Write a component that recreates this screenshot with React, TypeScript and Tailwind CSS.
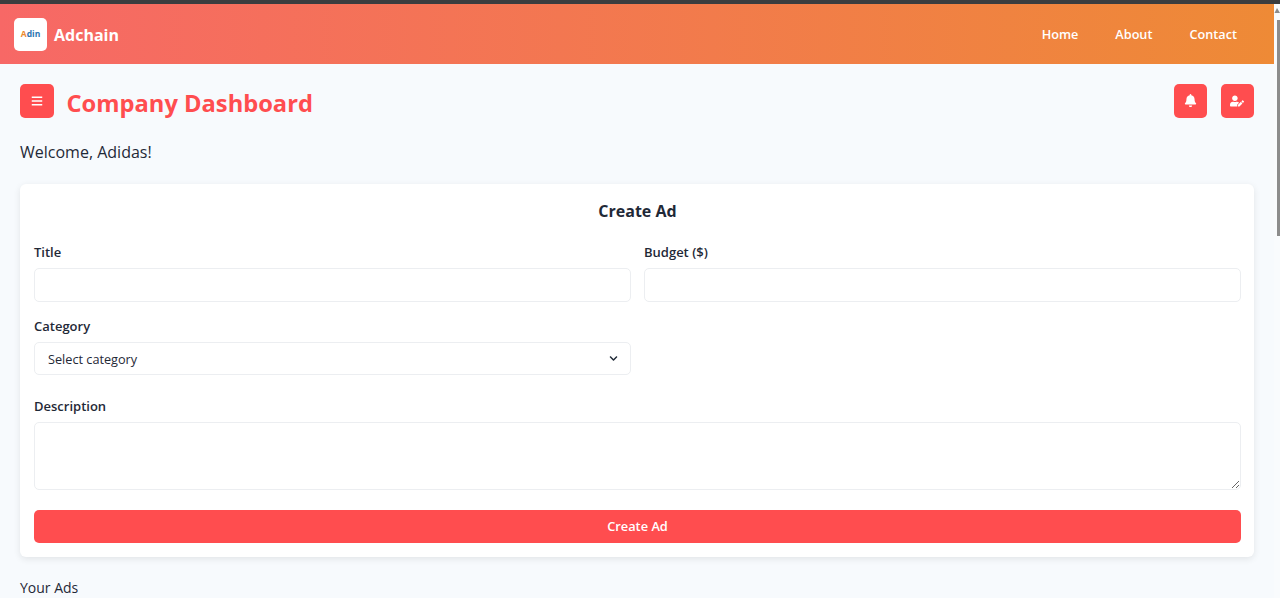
import { FaBars, FaBell, FaUserEdit, FaChevronDown } from 'react-icons/fa';

const inputCls = 'block w-full h-[33.5px] rounded-[5px] border border-[#eceef1] bg-white px-[13px] outline-none';
const iconBtn = 'w-[33.5px] h-[33.5px] rounded-[5px] bg-[#ff4d4f] text-white flex items-center justify-center';

function Field({ label, children }: { label: string; children: React.ReactNode }) {
  return (
    <div>
      <label className="block text-[13px] leading-[18px] font-[550] text-[#1f2937] mb-[7px]">{label}</label>
      {children}
    </div>
  );
}

export default function App() {
  return (
    <div className="h-[598px] overflow-hidden flex flex-col bg-[#f7fafd] text-[#1f2937] font-['Open_Sans','Noto_Sans',sans-serif]">
      <div className="h-1 shrink-0 bg-[#3b3d3f]" />
      <div className="flex flex-1 min-h-0">
        <div className="flex-1 min-w-0">
          {/* Navbar */}
          <nav className="h-[60px] flex items-center justify-between pl-[14px] pr-[37px] bg-linear-to-r/srgb from-[#f76866] to-[#ee8a36]">
            <div className="flex items-center gap-[7px]">
              <div className="w-[33px] h-[33px] rounded-[5px] bg-white flex items-center justify-center text-[8.5px] font-bold">
                <span className="text-[#ec8a2e]">A</span>
                <span className="text-[#2b74b0]">din</span>
              </div>
              <span className="text-white font-bold text-[16px] pt-[1px]">Adchain</span>
            </div>
            <div className="flex items-center gap-[37px] text-white font-[550] text-[12.7px] pt-[2px]">
              <a>Home</a>
              <a>About</a>
              <a>Contact</a>
            </div>
          </nav>

          <main className="px-5 pt-5">
            <div className="h-[33.5px] flex items-center justify-between">
              <div className="flex items-center gap-[13px]">
                <button className={iconBtn}>
                  <FaBars size={12} />
                </button>
                <h1 className="h-[33.5px] text-[23.7px] leading-[38px] font-bold text-[#ff4d4f]">Company Dashboard</h1>
              </div>
              <div className="flex gap-[13.4px]">
                <button className={iconBtn}>
                  <FaBell size={13} />
                </button>
                <button className={iconBtn}>
                  <FaUserEdit size={14} />
                </button>
              </div>
            </div>

            <p className="mt-[22.5px] text-[16px] leading-[24px]">Welcome, Adidas!</p>

            <section className="mt-5 bg-white rounded-md shadow-[0_2px_7px_rgba(0,0,0,0.09)] pl-[14px] pr-[13px] pt-[14px] pb-[13.5px]">
              <h2 className="text-center text-[16px] leading-[26px] font-bold mb-[19px]">Create Ad</h2>
              <div className="grid grid-cols-2 gap-x-[13px] gap-y-[15px]">
                <Field label="Title">
                  <input className={inputCls} />
                </Field>
                <Field label="Budget ($)">
                  <input className={inputCls} />
                </Field>
                <Field label="Category">
                  <div className={`${inputCls} flex items-center justify-between text-[12.7px]`}>
                    <span className="pt-[3px]">Select category</span>
                    <FaChevronDown size={9} className="mr-[-1px]" />
                  </div>
                </Field>
              </div>
              <div className="mt-[22px]">
                <Field label="Description">
                  <textarea className="block w-full h-[67.5px] rounded-[5px] border border-[#eceef1] bg-white px-3.5 py-2 outline-none resize-y" />
                </Field>
              </div>
              <button className="mt-5 w-full h-[33.5px] rounded-[5px] bg-[#ff4d4f] text-white text-[12.8px] font-[550] pt-[1px]">Create Ad</button>
            </section>

            <h3 className="mt-[20px] text-[14px] leading-[22px]">Your Ads</h3>
          </main>
        </div>
        {/* scrollbar */}
        <div className="w-[6px] shrink-0 bg-[#f9fbfd] flex flex-col items-end">
          <svg width="6" height="16" viewBox="0 0 6 16" className="shrink-0">
            <path d="M3 4 L6 9 L0.5 9 Z" fill="#8c8c8c" />
          </svg>
          <div className="w-[3px] h-[216px] bg-[#8c8c8c]" />
        </div>
      </div>
    </div>
  );
}
